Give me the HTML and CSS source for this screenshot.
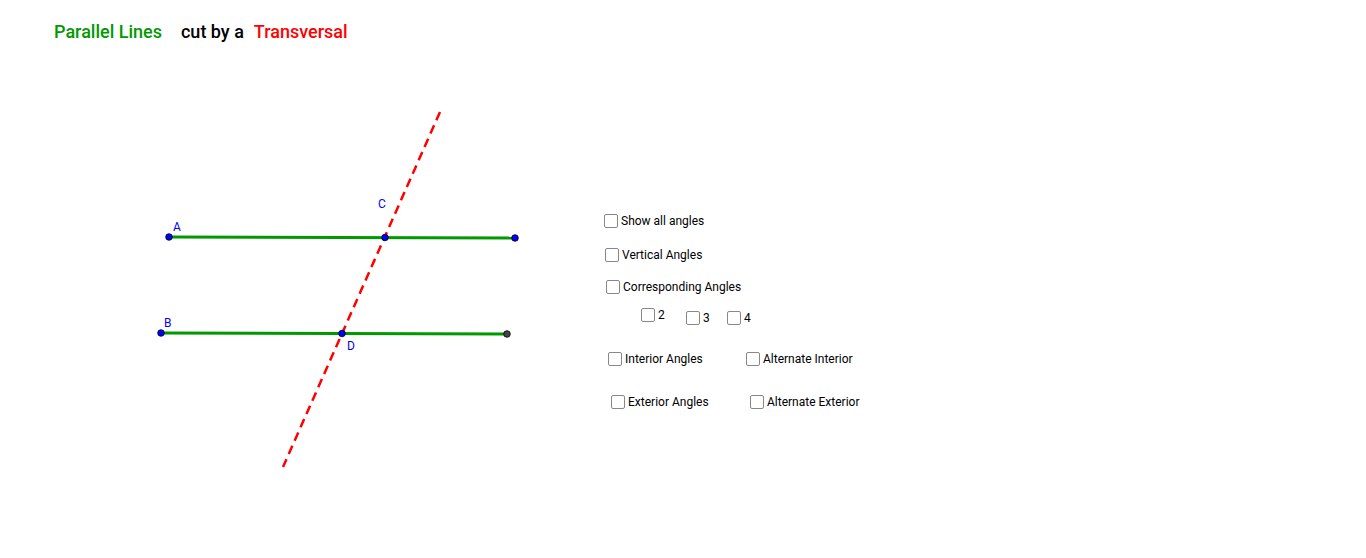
FILE: index.html
```html
<!DOCTYPE html>
<html>
<head>
    <title>Parallel Lines cut by a Transversal</title>
    <meta name="viewport" content="width=device-width, initial-scale=1">
    <link rel="stylesheet" href="styles.css">
</head>
<body>
    <div class="applet">
        <h1 class="title">
            <span class="green">Parallel Lines</span>
            <span class="black">cut by a</span>
            <span class="red">Transversal</span>
        </h1>

        <svg class="board" width="1366" height="558" viewBox="0 0 1366 558">
            <!-- transversal -->
            <line x1="440" y1="112" x2="283" y2="467" stroke="#ff0000" stroke-width="2.5" stroke-dasharray="9 5.6"/>
            <!-- parallel lines -->
            <line x1="169" y1="237" x2="515" y2="238" stroke="#009900" stroke-width="3"/>
            <line x1="161" y1="333" x2="507" y2="334" stroke="#009900" stroke-width="3"/>
            <!-- points -->
            <g stroke="#000" stroke-width="0.8">
                <circle cx="169" cy="237" r="3.3" fill="#0000ff"/>
                <circle cx="515" cy="238" r="3.3" fill="#0000ff"/>
                <circle cx="385" cy="237.5" r="3.3" fill="#0000ff"/>
                <circle cx="161" cy="333" r="3.3" fill="#0000ff"/>
                <circle cx="342" cy="333.5" r="3.3" fill="#0000ff"/>
                <circle cx="507" cy="334" r="3.3" fill="#444444"/>
            </g>
            <g class="pt-label" fill="#0000ff">
                <text x="173" y="231">A</text>
                <text x="378" y="208">C</text>
                <text x="164" y="327">B</text>
                <text x="347" y="350">D</text>
            </g>
        </svg>

        <label class="check" style="left:604px;top:215px"><span class="box"></span>Show all angles</label>
        <label class="check" style="left:605px;top:249px"><span class="box"></span>Vertical Angles</label>
        <label class="check" style="left:606px;top:281px"><span class="box"></span>Corresponding Angles</label>
        <label class="check" style="left:641px;top:309px"><span class="box"></span>2</label>
        <label class="check" style="left:686px;top:312px"><span class="box"></span>3</label>
        <label class="check" style="left:727px;top:312px"><span class="box"></span>4</label>
        <label class="check" style="left:608px;top:353px"><span class="box"></span>Interior Angles</label>
        <label class="check" style="left:746px;top:353px"><span class="box"></span>Alternate Interior</label>
        <label class="check" style="left:611px;top:396px"><span class="box"></span>Exterior Angles</label>
        <label class="check" style="left:750px;top:396px"><span class="box"></span>Alternate Exterior</label>
    </div>
</body>
</html>
```

FILE: styles.css
```css
body {
    margin: 0;
    background-color: white;
    font-family: Roboto, "Liberation Sans", sans-serif;
}

.applet {
    position: relative;
    width: 1366px;
    height: 558px;
    overflow: hidden;
}

.title {
    position: relative;
    z-index: 1;
    margin: 0;
    padding: 20px 0 0 54px;
    font-size: 18px;
    font-weight: 500;
    line-height: 24px;
    display: flex;
}

.green {
    color: #009900;
    margin-right: 19px;
}

.black {
    color: #000;
    margin-right: 10px;
}

.red {
    color: #ff0000;
}

.board {
    position: absolute;
    left: 0;
    top: 0;
}

.pt-label {
    font-family: Roboto, "Liberation Sans", sans-serif;
    font-size: 12px;
}

/* checkboxes sit on the applet canvas at their own spots */
.check {
    position: absolute;
    display: flex;
    align-items: center;
    gap: 3px;
    font-size: 12px;
    color: #000;
    line-height: 13px;
}

.box {
    width: 12px;
    height: 12px;
    border: 1px solid #888;
    border-radius: 2px;
    background: white;
    margin-top: -1px;
}
```
